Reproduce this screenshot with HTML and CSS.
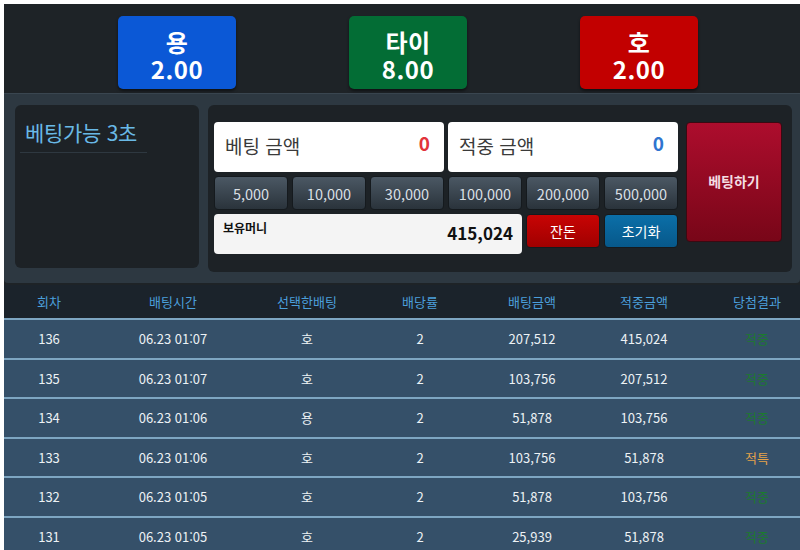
FILE: index.html
```html
<!DOCTYPE html>
<html lang="ko">
<head>
<meta charset="utf-8">
<link rel="stylesheet" href="styles.css">
</head>
<body>
<div class="page">
  <div class="top">
    <div class="odds odds-blue"><p class="odds-text">용<br>2.00</p></div>
    <div class="odds odds-green"><p class="odds-text">타이<br>8.00</p></div>
    <div class="odds odds-red"><p class="odds-text">호<br>2.00</p></div>
  </div>
  <div class="panel">
    <div class="timer">
      <div class="timer-title">베팅가능 3초</div>
    </div>
    <div class="betbox">
      <div class="betgrid">
        <div class="amount amount-left"><span class="amount-label">베팅 금액</span><span class="amount-val red">0</span></div>
        <div class="amount amount-right"><span class="amount-label">적중 금액</span><span class="amount-val blue">0</span></div>
        <button class="chip">5,000</button>
        <button class="chip">10,000</button>
        <button class="chip">30,000</button>
        <button class="chip">100,000</button>
        <button class="chip">200,000</button>
        <button class="chip">500,000</button>
        <div class="money"><span class="money-label">보유머니</span><span class="money-val">415,024</span></div>
        <button class="act act-red">잔돈</button>
        <button class="act act-blue">초기화</button>
      </div>
      <button class="betbtn">베팅하기</button>
    </div>
  </div>
  <table class="hist">
    <colgroup>
      <col class="c1"><col class="c2"><col class="c3"><col class="c4"><col class="c5"><col class="c6"><col class="c7">
    </colgroup>
    <thead>
      <tr><th>회차</th><th>배팅시간</th><th>선택한배팅</th><th>배당률</th><th>배팅금액</th><th>적중금액</th><th>당첨결과</th></tr>
    </thead>
    <tbody>
      <tr><td>136</td><td>06.23 01:07</td><td>호</td><td>2</td><td>207,512</td><td>415,024</td><td class="win">적중</td></tr>
      <tr><td>135</td><td>06.23 01:07</td><td>호</td><td>2</td><td>103,756</td><td>207,512</td><td class="win">적중</td></tr>
      <tr><td>134</td><td>06.23 01:06</td><td>용</td><td>2</td><td>51,878</td><td>103,756</td><td class="win">적중</td></tr>
      <tr><td>133</td><td>06.23 01:06</td><td>호</td><td>2</td><td>103,756</td><td>51,878</td><td class="tie">적특</td></tr>
      <tr><td>132</td><td>06.23 01:05</td><td>호</td><td>2</td><td>51,878</td><td>103,756</td><td class="win">적중</td></tr>
      <tr><td>131</td><td>06.23 01:05</td><td>호</td><td>2</td><td>25,939</td><td>51,878</td><td class="win">적중</td></tr>
    </tbody>
  </table>
</div>
</body>
</html>
```
FILE: styles.css
```css
* { box-sizing: border-box; }
html, body { margin: 0; padding: 0; background: #ffffff; overflow: hidden; }
body {
  font-family: "Noto Sans CJK KR", "Noto Sans", sans-serif;
  width: 800px;
  height: 550px;
}
.page {
  margin: 4px 0 0 4px;
  width: 796px;
  background: #1e2327;
}
.top {
  height: 89px;
  display: flex;
  padding: 12px 0 0 114px;
  gap: 113px;
}
.odds {
  width: 118px;
  height: 73px;
  border-radius: 5px;
  display: flex;
  align-items: center;
  justify-content: center;
  padding-top: 4px;
  color: #ffffff;
  font-weight: 700;
  box-shadow: 0 2px 3px rgba(0,0,0,0.5);
}
.odds-text {
  margin: 0;
  font-size: 24px;
  line-height: 27px;
  text-align: center;
  letter-spacing: 0.5px;
}
.odds-blue { background: #0b58d6; }
.odds-green { background: #036d35; }
.odds-red { background: #c20000; }

.panel {
  background: #2d3841;
  border-top: 1px solid #3a4650;
  border-radius: 0 0 4px 4px;
  height: 190px;
  display: flex;
  align-items: flex-start;
  padding: 11px 8px 0 11px;
  gap: 9px;
}
.timer {
  width: 184px;
  height: 163px;
  background: #1d2226;
  border-radius: 6px;
  padding: 14px 0 0 5px;
}
.timer-title {
  color: #69b9e6;
  font-size: 21px;
  line-height: 27px;
  letter-spacing: -0.3px;
  width: 127px;
  padding: 0 0 6px 5px;
  border-bottom: 1px solid #2e3840;
  white-space: nowrap;
}
.betbox {
  width: 584px;
  height: 167px;
  background: #1d2226;
  border-radius: 6px;
  display: flex;
  align-items: flex-start;
  padding: 17px 10px 0 6px;
  gap: 8px;
}
.betgrid {
  display: grid;
  grid-template-columns: repeat(6, 74px);
  grid-template-rows: 50px 34px 40px;
  gap: 4px;
}
.amount {
  grid-column: span 3;
  background: #ffffff;
  border-radius: 4px;
  display: flex;
  align-items: center;
  justify-content: space-between;
  padding: 0 14px 4px 11px;
}
.amount-label { color: #3a3a3a; font-size: 19px; }
.amount-val { font-size: 19px; font-weight: 700; align-self: flex-start; margin-top: 7px; }
.red { color: #e2333a; }
.blue { color: #2f74cf; }
.chip {
  font-family: inherit;
  font-size: 14.5px;
  color: #d9dfe4;
  border: 1px solid #151a1e;
  border-radius: 4px;
  background: linear-gradient(#4b5864, #2a333b);
  padding: 0;
}
.money {
  grid-column: span 4;
  background: #f4f4f4;
  border-radius: 4px;
  display: flex;
  justify-content: space-between;
  padding: 5px 9px 0 9px;
}
.money-label { font-size: 12px; font-weight: 700; color: #111; line-height: 17px; }
.money-val { font-size: 17px; font-weight: 700; color: #111; line-height: 25px; margin-top: 1px; }
.act {
  font-family: inherit;
  font-size: 14px;
  color: #ffffff;
  border: 1px solid #151a1e;
  border-radius: 4px;
  height: 34px;
  padding: 0;
}
.act-red { background: linear-gradient(#c80404, #a00000); }
.act-blue { background: linear-gradient(#0b6fa8, #07588a); }
.betbtn {
  font-family: inherit;
  width: 96px;
  height: 120px;
  border: 1px solid #3a0a12;
  border-radius: 4px;
  background: linear-gradient(#ad0d2d, #780618);
  color: #f4dde2;
  font-size: 14px;
  font-weight: 700;
  padding: 0 0 2px;
}

.hist {
  margin-top: 2px;
  border-collapse: collapse;
  table-layout: fixed;
  width: 808px;
  font-size: 13px;
}
.c1 { width: 90px; }
.c2 { width: 158px; }
.c3 { width: 110px; }
.c4 { width: 116px; }
.c5 { width: 108px; }
.c6 { width: 116px; }
.c7 { width: 110px; }
.hist th {
  background: #1b232b;
  color: #4b9fdb;
  font-weight: 400;
  height: 34px;
  padding: 0;
  text-align: center;
}
.hist td {
  background: #355069;
  color: #edf2f5;
  height: 39.5px;
  padding: 0;
  text-align: center;
  border-top: 2px solid #7ea6c2;
}
.hist td.win { color: #1c7a2e; }
.hist td.tie { color: #e5a24a; }
```
